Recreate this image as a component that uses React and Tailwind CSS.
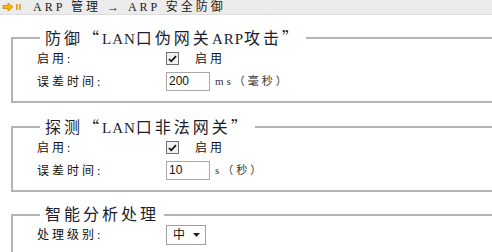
import React from "react";

const FONT = { fontFamily: '"Liberation Serif", "Noto Sans CJK SC", serif' };

// small orange "go" arrow used in the breadcrumb bar
function NavIcon() {
  return (
    <svg width="20" height="12" viewBox="0 0 20 12">
      <path d="M1 4.5h5V2l5 4-5 4V7.5H1z" fill="#f5b400" stroke="#d08a00" strokeWidth="0.8" />
      <rect x="14" y="3" width="1.6" height="6" fill="#e69a00" />
      <rect x="17" y="3" width="1.6" height="6" fill="#e69a00" />
    </svg>
  );
}

// full-width CJK quote
function Q({ children }) {
  return <span className="font-['Noto_Sans_CJK_SC']">{children}</span>;
}

// latin bits inside a legend sit tighter
function L({ children }) {
  return <span className="tracking-[1px] text-[15px]">{children}</span>;
}

function Group({ title, children }) {
  return (
    <fieldset className="w-[520px] border-2 border-[#b4b4b4] pl-[24px] pb-[10px] m-0">
      <legend className="ml-[3px] px-[5px] text-[16px] leading-[20px] tracking-[3px] text-[#1c1c2c]">
        {title}
      </legend>
      <div className="flex flex-col gap-[4px]">{children}</div>
    </fieldset>
  );
}

function Row({ label, children }) {
  return (
    <div className="flex items-center h-[19px]">
      <span className="w-[129px] text-[12px] tracking-[3px] text-[#111]">{label}</span>
      <div className="flex items-center">{children}</div>
    </div>
  );
}

function Check() {
  return (
    <div className="flex items-center">
      <span className="w-[13px] h-[13px] border border-[#707070] bg-[#f0f0f0] flex items-center justify-center">
        <svg width="9" height="8" viewBox="0 0 9 8">
          <path d="M1 4l2.2 2.3L8 1.2" fill="none" stroke="#111" strokeWidth="1.8" />
        </svg>
      </span>
      <span className="ml-[16px] text-[12px] tracking-[3px] text-[#111]">启用</span>
    </div>
  );
}

function Num({ value, unit }) {
  return (
    <div className="flex items-center">
      <span className="w-[44px] h-[19px] border border-[#a8a8a8] bg-white px-[2px] text-[12px] leading-[17px] text-[#111] font-['Liberation_Sans']">
        {value}
      </span>
      <span className="ml-[5px] text-[11px] tracking-[3px] text-[#333]">{unit}</span>
    </div>
  );
}

export default function App() {
  return (
    <div className="w-[492px] h-[252px] bg-white overflow-hidden" style={FONT}>
      {/* breadcrumb bar */}
      <div className="h-[15px] bg-[#ececec] border-b border-[#dedede] flex items-center pl-[2px]">
        <NavIcon />
        <span className="ml-[11px] text-[12px] leading-[14px] tracking-[3px] text-[#1a1a1a]">
          ARP 管理 → ARP 安全防御
        </span>
      </div>

      <div className="pl-[11px] pt-[12px] flex flex-col gap-[13px]">
        <Group
          title={
            <>
              防御<Q>“</Q><L>LAN</L>口伪网关<L>ARP</L>攻击<Q>”</Q>
            </>
          }
        >
          <Row label="启用:">
            <Check />
          </Row>
          <Row label="误差时间:">
            <Num value="200" unit="ms（毫秒）" />
          </Row>
        </Group>

        <Group
          title={
            <>
              探测<Q>“</Q><L>LAN</L>口非法网关<Q>”</Q>
            </>
          }
        >
          <Row label="启用:">
            <Check />
          </Row>
          <Row label="误差时间:">
            <Num value="10" unit="s（秒）" />
          </Row>
        </Group>

        <Group title="智能分析处理">
          <Row label="处理级别:">
            <div className="w-[40px] h-[20px] border border-[#a0a0a0] bg-white flex items-center pl-[6px] gap-[8px]">
              <span className="text-[12px] text-[#111]">中</span>
              <svg width="7" height="4" viewBox="0 0 7 4">
                <path d="M0 0h7L3.5 4z" fill="#222" />
              </svg>
            </div>
          </Row>
        </Group>
      </div>
    </div>
  );
}
